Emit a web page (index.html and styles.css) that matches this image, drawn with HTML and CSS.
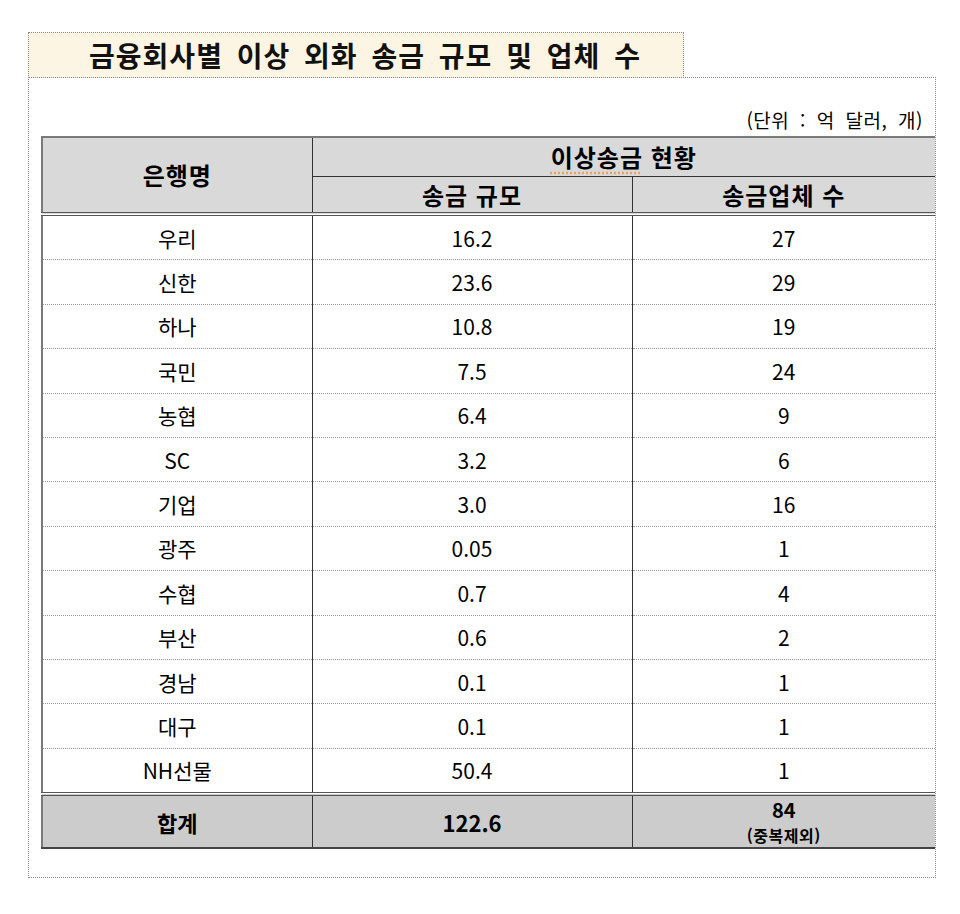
FILE: index.html
```html
<!DOCTYPE html>
<html lang="ko">
<head>
<meta charset="utf-8">
<title>금융회사별 이상 외화 송금 규모 및 업체 수</title>
<link rel="stylesheet" href="styles.css">
</head>
<body>
<div class="page">
  <div class="title-box">
    <h1 class="title">금융회사별 이상 외화 송금 규모 및 업체 수</h1>
  </div>
  <div class="frame">
    <div class="unit">(단위 : 억 달러, 개)</div>
    <table class="data">
      <colgroup>
        <col class="c1"><col class="c2"><col class="c3">
      </colgroup>
      <thead>
        <tr class="h1">
          <th rowspan="2" class="first">은행명</th>
          <th colspan="2" class="span"><span class="spell">이상송금</span> 현황</th>
        </tr>
        <tr class="h2">
          <th>송금 규모</th>
          <th>송금업체 수</th>
        </tr>
      </thead>
      <tbody>
        <tr><td class="first">우리</td><td>16.2</td><td>27</td></tr>
        <tr><td class="first">신한</td><td>23.6</td><td>29</td></tr>
        <tr><td class="first">하나</td><td>10.8</td><td>19</td></tr>
        <tr><td class="first">국민</td><td>7.5</td><td>24</td></tr>
        <tr><td class="first">농협</td><td>6.4</td><td>9</td></tr>
        <tr><td class="first">SC</td><td>3.2</td><td>6</td></tr>
        <tr><td class="first">기업</td><td>3.0</td><td>16</td></tr>
        <tr><td class="first">광주</td><td>0.05</td><td>1</td></tr>
        <tr><td class="first">수협</td><td>0.7</td><td>4</td></tr>
        <tr><td class="first">부산</td><td>0.6</td><td>2</td></tr>
        <tr><td class="first">경남</td><td>0.1</td><td>1</td></tr>
        <tr><td class="first">대구</td><td>0.1</td><td>1</td></tr>
        <tr class="last"><td class="first">NH선물</td><td>50.4</td><td>1</td></tr>
      </tbody>
      <tfoot>
        <tr class="total">
          <td class="first">합계</td>
          <td>122.6</td>
          <td><div class="big">84</div><div class="small">(중복제외)</div></td>
        </tr>
      </tfoot>
    </table>
  </div>
</div>
</body>
</html>
```

FILE: styles.css
```css
html, body {
  margin: 0;
  padding: 0;
  background: #ffffff;
}
body {
  font-family: "Noto Sans CJK KR", "Noto Sans", sans-serif;
  color: #000;
}
.page {
  padding: 32px 0 0 28px;
}
.title-box {
  width: 656px;
  height: 46px;
  box-sizing: border-box;
  border: 1px dotted #8a8a8a;
  background: #fcf5e3;
  display: flex;
  align-items: center;
  justify-content: center;
  padding-left: 18px;
  position: relative;
  z-index: 1;
}
.title {
  margin: 0;
  font-size: 28px;
  font-weight: 700;
  line-height: 30px;
  letter-spacing: 1px;
  word-spacing: 5px;
  color: #111;
}
.frame {
  width: 908px;
  height: 801px;
  box-sizing: border-box;
  margin-top: -1px;
  border: 1px dotted #8a8a8a;
  padding-left: 12px;
}
.unit {
  height: 58px;
  box-sizing: border-box;
  padding: 29px 12px 0 0;
  text-align: right;
  font-size: 19px;
  line-height: 26px;
  letter-spacing: 0.5px;
  word-spacing: 5px;
}
.data {
  width: 893px;
  border-collapse: collapse;
  table-layout: fixed;
}
.c1 { width: 270px; }
.c2 { width: 320px; }
.c3 { width: 303px; }
.data th, .data td {
  padding: 0;
  text-align: center;
  vertical-align: middle;
  border-left: 1px solid #333;
}
.data th.first, .data td.first {
  border-left: 2px solid #7a7a7a;
}
.data thead th {
  background: #d9d9d9;
  font-weight: 700;
  font-size: 24px;
  line-height: 28px;
  letter-spacing: 1px;
}
.data thead tr.h1 th {
  border-top: 2px solid #7a7a7a;
  height: 38px;
}
.data thead tr.h1 th.span {
  border-bottom: 1px solid #333;
}
.data thead tr.h2 th {
  height: 35px;
}
.data thead th.first,
.data thead tr.h2 th {
  border-bottom: 4px double #555;
}
.spell {
  text-decoration: underline dotted #f0a050;
  text-underline-offset: 5px;
}
.data tbody td {
  height: 43.4px;
  font-size: 21px;
  line-height: 26px;
  border-bottom: 1px dotted #999;
}
.data tbody tr.last td {
  border-bottom: 4px double #555;
}
.data tfoot td {
  background: #cccccc;
  height: 51px;
  font-weight: 700;
  font-size: 22px;
  line-height: 26px;
  border-bottom: 2px solid #444;
}
.big {
  font-size: 20px;
  line-height: 27px;
}
.small {
  font-size: 16px;
  line-height: 24px;
  letter-spacing: 0.5px;
}
```
